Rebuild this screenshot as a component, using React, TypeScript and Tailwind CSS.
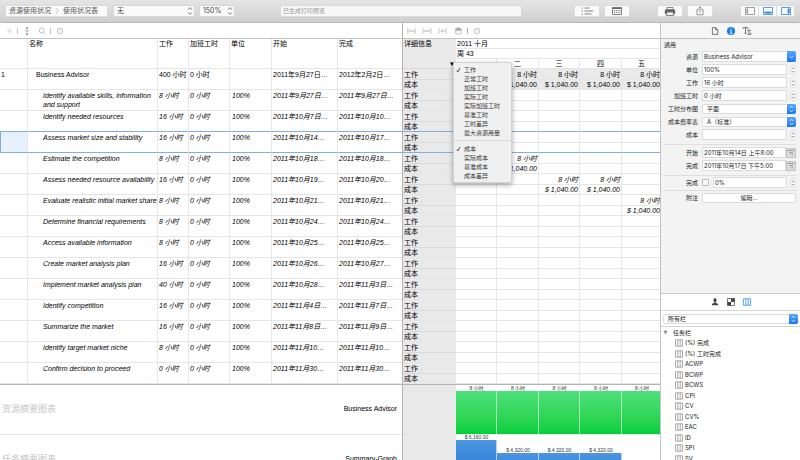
import type { ReactNode } from "react";

type Task = {
  id?: string;
  name: string;
  work: string;
  units: string;
  start: string;
  end: string;
  days?: number[];
  selected?: boolean;
};

const tasks: Task[] = [
  { id: "1", name: "Business Advisor", work: "400 小时", units: "", start: "2011年9月27日…", end: "2012年2月2日…", days: [1, 2, 3, 4] },
  { name: "Identify available skills, information\nand support", work: "8 小时", units: "100%", start: "2011年9月27日…", end: "2011年9月27日…" },
  { name: "Identify needed resources", work: "16 小时", units: "100%", start: "2011年10月7日…", end: "2011年10月10…" },
  { name: "Assess market size and stability", work: "16 小时", units: "100%", start: "2011年10月14…", end: "2011年10月17…", selected: true },
  { name: "Estimate the competition", work: "8 小时", units: "100%", start: "2011年10月18…", end: "2011年10月18…", days: [1] },
  { name: "Assess needed resource availability", work: "16 小时", units: "100%", start: "2011年10月19…", end: "2011年10月20…", days: [2, 3] },
  { name: "Evaluate realistic initial market share", work: "8 小时", units: "100%", start: "2011年10月21…", end: "2011年10月21…", days: [4] },
  { name: "Determine financial requirements", work: "8 小时", units: "100%", start: "2011年10月24…", end: "2011年10月24…" },
  { name: "Access available information", work: "8 小时", units: "100%", start: "2011年10月25…", end: "2011年10月25…" },
  { name: "Create market analysis plan", work: "16 小时", units: "100%", start: "2011年10月26…", end: "2011年10月27…" },
  { name: "Implement market analysis plan", work: "40 小时", units: "100%", start: "2011年10月28…", end: "2011年11月3日…" },
  { name: "Identify competition", work: "16 小时", units: "100%", start: "2011年11月4日…", end: "2011年11月7日…" },
  { name: "Summarize the market", work: "16 小时", units: "100%", start: "2011年11月8日…", end: "2011年11月9日…" },
  { name: "Identify target market niche", work: "8 小时", units: "100%", start: "2011年11月10…", end: "2011年11月10…" },
  { name: "Confirm decision to proceed", work: "0 小时", units: "100%", start: "2011年11月30…", end: "2011年11月30…" },
];

const dayNames = ["", "二", "三", "四", "五"];
const workItems = ["工作", "正常工时", "加班工时", "实际工时", "实际加班工时", "基准工时", "工时差异", "最大资源用量"];
const costItems = ["成本", "实际成本", "基准成本", "成本差异"];
const columnItems = ["(%) 完成", "(%) 工时完成", "ACWP", "BCWP", "BCWS", "CPI", "CV", "CV%", "EAC", "ID", "SPI", "SV"];

const TABLE_FONT = "font-['Liberation_Sans','Noto_Sans_CJK_SC',sans-serif]";
const LINE = "border-[#e6e6e6]";
const SELECTED_LINE = "border-[#7fb0df]";

function lineFor(index: number) {
  return tasks[index].selected || tasks[index + 1]?.selected ? SELECTED_LINE : LINE;
}

function Chevrons({ className = "" }: { className?: string }) {
  return (
    <svg viewBox="0 0 6 10" className={className} fill="none" stroke="currentColor" strokeWidth="1" aria-hidden="true">
      <path d="M1 3.6 3 1.6l2 2M1 6.4l2 2 2-2" />
    </svg>
  );
}

function ToolSelect({ label, value, width }: { label: string; value: string; width: string }) {
  return (
    <div className={`relative h-3 shrink-0 ${width}`}>
      <select
        aria-label={label}
        className="block h-3 w-full appearance-none rounded-[2px] border border-[#d6d6d6] bg-[#fafafa] pl-[3px] text-[7px] leading-[10px] text-[#444]"
      >
        <option>{value}</option>
      </select>
      <Chevrons className="pointer-events-none absolute top-[1px] right-[2px] h-[10px] w-[6px] text-[#777]" />
    </div>
  );
}

function ToolButton({ label, children }: { label: string; children: ReactNode }) {
  return (
    <button
      aria-label={label}
      className="flex h-3 w-[26px] shrink-0 items-center justify-center rounded-[2px] border border-[#dcdcdc] bg-[#fafafa] text-[#666]"
    >
      {children}
    </button>
  );
}

function Toolbar() {
  return (
    <header className="flex h-[23px] shrink-0 items-center border-b border-[#b8b8b8] bg-linear-to-b from-[#e5e5e5] to-[#cfcfcf] px-[5px]">
      <nav className="flex h-3 w-[103px] shrink-0 items-center gap-1 rounded-[2px] border border-[#dcdcdc] bg-[#fafafa] px-[3px] text-[7px] leading-[10px] whitespace-nowrap text-[#555]">
        <a href="#usage">资源使用状况</a>
        <svg viewBox="0 0 4 8" className="h-[8px] w-[4px] text-[#bbb]" fill="none" stroke="currentColor" strokeWidth="0.8" aria-hidden="true">
          <path d="m1 1 2 3-2 3" />
        </svg>
        <a href="#table">使用状况表</a>
      </nav>
      <div className="ml-[5px] flex gap-1">
        <ToolSelect label="筛选" value="无" width="w-[82px]" />
        <ToolSelect label="缩放" value="150%" width="w-[36px]" />
      </div>
      <output className="mr-[52px] ml-[45px] block h-3 min-w-0 flex-1 rounded-[2px] border border-[#dadada] bg-[#f7f7f7] px-[2px] text-[6px] leading-[10px] text-[#999]">
        已生成打印预览
      </output>
      <div className="flex gap-1">
        <ToolButton label="列表">
          <svg viewBox="0 0 12 8" className="h-2 w-3" fill="none" stroke="currentColor" strokeWidth="0.8" aria-hidden="true">
            <path d="M.5 1h1.4M.5 4h1.4M.5 7h1.4M3.500 1h5M3.500 4h8.500M3.500 7h7" />
          </svg>
        </ToolButton>
        <ToolButton label="日历">
          <svg viewBox="0 0 10 8" className="h-2 w-[10px]" fill="none" stroke="currentColor" strokeWidth="0.8" aria-hidden="true">
            <path d="M.5.5h9v7h-9z" />
            <path d="M.5 1.3h9" strokeWidth="1.4" />
            <path d="M2 3.6h6.5M2 5.4h6.5" strokeDasharray="1.1 0.7" />
          </svg>
        </ToolButton>
      </div>
      <div className="ml-[27px] flex gap-1">
        <ToolButton label="打印">
          <svg viewBox="0 0 12 9" className="h-[9px] w-3" aria-hidden="true">
            <path d="M3 .5h6v2.2H3z" fill="#fff" stroke="#555" strokeWidth="0.7" />
            <rect x="0.8" y="2.6" width="10.4" height="4.4" rx="1" fill="#666" />
            <path d="M2.8 5h6.4l.6 3.5H2.2z" fill="#eee" stroke="#555" strokeWidth="0.7" />
          </svg>
        </ToolButton>
        <ToolButton label="共享">
          <svg viewBox="0 0 8 10" className="h-[10px] w-2" fill="none" stroke="currentColor" strokeWidth="0.7" aria-hidden="true">
            <path d="M2.6 3.6H1v5.2h6V3.6H5.4M4 6.5V.9M2.4 2.4 4 .8l1.6 1.6" />
          </svg>
        </ToolButton>
      </div>
      <div className="ml-[27px] flex h-3 w-[55px] shrink-0 divide-x divide-[#dcdcdc] rounded-[2px] border border-[#dcdcdc] bg-[#fafafa]">
        <button aria-label="左侧栏" className="flex flex-1 items-center justify-center">
          <svg viewBox="0 0 10 8" className="h-2 w-[10px]" aria-hidden="true">
            <path d="M.5.5h9v7h-9z" fill="none" stroke="#888" strokeWidth="0.8" />
            <path d="M1.5 1.5h1.6v5H1.5z" fill="#999" />
          </svg>
        </button>
        <button aria-label="底部栏" className="flex flex-1 items-center justify-center">
          <svg viewBox="0 0 10 8" className="h-2 w-[10px]" aria-hidden="true">
            <path d="M.5.5h9v7h-9z" fill="none" stroke="#2f86ea" strokeWidth="0.8" />
            <path d="M1.5 4.6h7v2h-7z" fill="#2f86ea" />
          </svg>
        </button>
        <button aria-label="右侧栏" className="flex flex-1 items-center justify-center">
          <svg viewBox="0 0 10 8" className="h-2 w-[10px]" aria-hidden="true">
            <path d="M.5.5h9v7h-9z" fill="none" stroke="#2f86ea" strokeWidth="0.8" />
            <path d="M6.6 1.5h2v5h-2z" fill="#2f86ea" />
          </svg>
        </button>
      </div>
    </header>
  );
}

function TaskTools() {
  return (
    <div className="flex h-4 shrink-0 items-center border-b border-[#c4c4c4] px-[6px] text-[#b4b4b4]">
      <svg viewBox="0 0 60 10" className="h-[10px] w-[60px]" fill="none" stroke="currentColor" strokeWidth="0.8" aria-hidden="true">
        <path d="M1 5h5M3.5 2.5v5" stroke="#ccc" />
        <path d="M11.5 2v6M44.5 2v6" />
        <path d="M19.5 5h3M21 1v2.5M21 6.5V9M20 2.2l1-1 1 1M20 7.8l1 1 1-1" stroke="#777" />
        <circle cx="35.6" cy="4.4" r="2.4" />
        <path d="m37.4 6.2 2 2" />
        <circle cx="54" cy="5" r="2.8" />
        <path d="M54 3.4V5h1.4" stroke="#ccc" />
      </svg>
    </div>
  );
}

function TimelineTools() {
  return (
    <div className="flex h-4 shrink-0 items-center border-b border-[#c4c4c4] px-[4px] text-[#b4b4b4]">
      <svg viewBox="0 0 74 10" className="h-[10px] w-[74px]" fill="none" stroke="currentColor" strokeWidth="0.8" aria-hidden="true">
        <path d="M.8 2.2v5.6M8.2 2.2v5.6M2 5h5M3.4 3.8 2.2 5l1.2 1.2M5.6 3.8 6.8 5 5.6 6.2" />
        <path d="M16 2.2v5.6M24 2.2v5.6M16.8 5h6.4M18 3.8 19.2 5 18 6.2M22 3.8 20.8 5 22 6.2" />
        <path d="M32 2.2v5.6M39 2.2v5.6M33 5h5M35.5 3.6v2.8" />
        <path d="M48.2 4.4a3.2 2.6 0 0 1 6.4 0z" fill="#aaa" />
        <path d="M48.8 5v3h5.2V5" />
        <path d="M60.5 2v6" stroke="#999" />
        <circle cx="70" cy="5" r="2.8" />
        <path d="M70 3.4V5h1.4" stroke="#ccc" />
      </svg>
    </div>
  );
}

function TaskTable() {
  return (
    <table className={`w-full shrink-0 table-fixed border-separate border-spacing-0 text-left text-[7px] leading-[9px] whitespace-pre text-black ${TABLE_FONT}`}>
      <colgroup>
        <col className="w-[28px]" />
        <col />
        <col className="w-[31px]" />
        <col className="w-[41px]" />
        <col className="w-[42px]" />
        <col className="w-[66px]" />
        <col className="w-[64px]" />
      </colgroup>
      <thead>
        <tr>
          {["", "名称", "工作", "加班工时", "单位", "开始", "完成"].map((title, i) => (
            <th
              key={title}
              scope="col"
              className={`h-[30px] border-b px-[1px] align-top font-normal ${LINE} ${i < 6 ? "border-r" : ""}`}
            >
              {title}
            </th>
          ))}
        </tr>
      </thead>
      <tbody>
        {tasks.map((task, i) => {
          const cell = `h-[21px] border-b py-[1px] align-top ${lineFor(i)}`;
          const inner = `${cell} border-r border-r-[#e6e6e6]`;
          return (
            <tr key={task.name} className={task.id ? "" : "italic"}>
              <td className={`${inner} pl-[1px] ${task.selected ? "border-l border-l-[#7fb0df] bg-[#e6f1fd]" : ""}`}>{task.id}</td>
              <td className={`${inner} ${task.id ? "pl-[8px]" : "pl-[15px]"}`}>{task.name}</td>
              <td className={`${inner} pl-[1px]`}>{task.work}</td>
              <td className={`${inner} pl-[1px]`}>0 小时</td>
              <td className={`${inner} pl-[2px]`}>{task.units}</td>
              <td className={`${inner} pl-[1px]`}>{task.start}</td>
              <td className={`${cell} pl-[1px]`}>{task.end}</td>
            </tr>
          );
        })}
      </tbody>
    </table>
  );
}

function TimelineTable() {
  return (
    <table className={`w-full min-w-[259px] shrink-0 table-fixed border-separate border-spacing-0 text-right text-[7px] leading-[9px] whitespace-nowrap text-black ${TABLE_FONT}`}>
      <colgroup>
        <col className="w-[53px]" />
        <col className="w-[41px]" />
        <col className="w-[42px]" />
        <col className="w-[41px]" />
        <col className="w-[42px]" />
        <col />
      </colgroup>
      <thead className="text-left">
        <tr>
          <th scope="col" rowSpan={3} className="border-b border-[#dadada] bg-[#e9e9e9] px-[1px] align-top font-normal">
            详细信息
          </th>
          <th colSpan={5} className={`h-[10px] border-b px-[1px] font-normal ${LINE}`}>
            2011 十月
          </th>
        </tr>
        <tr>
          <th colSpan={5} className={`h-[10px] border-b px-[1px] font-normal ${LINE}`}>
            周 43
          </th>
        </tr>
        <tr className="text-center">
          {dayNames.map((day) => (
            <th key={day} className={`h-[10px] border-r border-b font-normal ${LINE}`}>
              {day}
            </th>
          ))}
        </tr>
      </thead>
      {tasks.map((task, i) => {
        const shade = task.id ? "bg-[#e9e9e9]" : "";
        return (
          <tbody key={task.name}>
            <tr>
              <th scope="row" className="h-[11px] border-b border-[#dadada] bg-[#e9e9e9] px-[1px] text-left font-normal">
                工作
              </th>
              {dayNames.map((day, d) => (
                <td key={day} className={`h-[11px] border-r border-b pr-[1px] ${LINE} ${shade} ${task.id ? "" : "italic"}`}>
                  {task.days?.includes(d) ? "8 小时" : ""}
                </td>
              ))}
            </tr>
            <tr>
              <th scope="row" className={`h-[10px] border-b bg-[#e9e9e9] px-[1px] text-left font-normal ${lineFor(i)}`}>
                成本
              </th>
              {dayNames.map((day, d) => (
                <td key={day} className={`h-[10px] border-r border-b border-r-[#e6e6e6] pr-[1px] ${lineFor(i)} ${shade} ${task.id ? "" : "italic"}`}>
                  {task.days?.includes(d) ? "$ 1,040.00" : ""}
                </td>
              ))}
            </tr>
          </tbody>
        );
      })}
    </table>
  );
}

function MenuItem({ text, checked }: { text: string; checked: boolean }) {
  return (
    <button
      role="menuitemcheckbox"
      aria-checked={checked}
      className="flex h-[9px] w-full items-center gap-[3px] pl-[2px] text-[6px] leading-[9px] whitespace-nowrap text-[#333]"
    >
      <svg viewBox="0 0 5 6" className="h-[6px] w-[5px]" fill="none" stroke="currentColor" strokeWidth="0.8" aria-hidden="true">
        {checked && <path d="M.8 3.4 1.8 5 4 .8" />}
      </svg>
      {text}
    </button>
  );
}

function DetailMenu() {
  return (
    <div role="menu" className="absolute top-[23px] left-[50px] w-[59px] rounded-[2px] border border-[#d2d2d2] bg-[#f0f0f0] py-[2px] shadow-[0_2px_5px_rgba(0,0,0,0.35)]">
      {workItems.map((text, i) => (
        <MenuItem key={text} text={text} checked={i === 0} />
      ))}
      <hr className="my-[3px] border-[#dadada]" />
      {costItems.map((text, i) => (
        <MenuItem key={text} text={text} checked={i === 0} />
      ))}
    </div>
  );
}

const SUMMARY_GRID = "grid min-w-[259px] grid-cols-[53px_41px_42px_41px_42px_minmax(40px,1fr)] shrink-0";

function SummaryChart({ bars }: { bars: { label: string; height: number; fill: string }[] }) {
  return (
    <div className={`${SUMMARY_GRID} h-[50px] border-b text-center text-[5px] leading-[5px] text-[#333] ${LINE} ${TABLE_FONT}`}>
      <div className="bg-[#e9e9e9]" />
      {bars.map((bar, i) => (
        <div key={i} className={`flex flex-col justify-end whitespace-nowrap ${bar.fill ? "" : "invisible"}`}>
          <span>{bar.label}</span>
          <div className={`w-full border-r border-white/60 ${bar.fill}`} style={{ height: bar.height }} />
        </div>
      ))}
    </div>
  );
}

const GREEN = "bg-linear-to-b from-[#4de07a] to-[#00cf3a]";
const BLUE = "bg-linear-to-b from-[#4a96e0] to-[#1f6fd0]";
const hourBars = dayNames.map(() => ({ label: "8 小时", height: 43, fill: GREEN }));
const costBars = [
  { label: "$ 6,160.00", height: 44, fill: BLUE },
  { label: "$ 4,320.00", height: 31, fill: BLUE },
  { label: "$ 4,320.00", height: 31, fill: BLUE },
  { label: "$ 4,320.00", height: 31, fill: BLUE },
  { label: "", height: 0, fill: "" },
];

function SummaryLabel({ title, name }: { title: string; name: string }) {
  return (
    <div className={`flex h-[50px] shrink-0 items-center justify-between border-b pr-[5px] pb-[2px] pl-[2px] ${LINE} ${TABLE_FONT}`}>
      <h2 className="text-[9px] leading-[12px] text-[#c6c6c6]">{title}</h2>
      <span className="text-[7px] leading-[9px] text-black">{name}</span>
    </div>
  );
}

function Field({ id, label, children }: { id: string; label: string; children: ReactNode }) {
  return (
    <div className="flex h-[13px] items-center">
      <label htmlFor={id} className="w-[37px] shrink-0 text-right whitespace-nowrap">
        {label}
      </label>
      <div className="ml-[4px] flex min-w-0 flex-1 items-center">{children}</div>
    </div>
  );
}

const INPUT = "block h-[11px] min-w-0 flex-1 border border-[#dcdcdc] bg-white px-[1px] text-[6px] leading-[9px] text-[#222]";

function Stepper({ label }: { label: string }) {
  return (
    <button aria-label={label} className="ml-[3px] flex h-[10px] w-[6px] shrink-0 items-center justify-center rounded-[2px] border border-[#e2e2e2] bg-[#fafafa]">
      <Chevrons className="h-[8px] w-[4px] text-[#666]" />
    </button>
  );
}

function StepField({ id, label, value }: { id: string; label: string; value: string }) {
  return (
    <Field id={id} label={label}>
      <input id={id} defaultValue={value} className={INPUT} />
      <Stepper label={`调整${label}`} />
    </Field>
  );
}

function BlueCap({ down = false }: { down?: boolean }) {
  return (
    <span className="pointer-events-none absolute top-0 right-0 flex h-full w-[9px] items-center justify-center rounded-r-[2px] bg-linear-to-b from-[#58a8f8] to-[#1a76ee] text-white">
      {down ? (
        <svg viewBox="0 0 6 10" className="h-[8px] w-[5px]" fill="none" stroke="currentColor" strokeWidth="1" aria-hidden="true">
          <path d="m1 4 2 2 2-2" />
        </svg>
      ) : (
        <Chevrons className="h-[8px] w-[5px]" />
      )}
    </span>
  );
}

function SelectField({ id, label, value }: { id: string; label: string; value: string }) {
  return (
    <Field id={id} label={label}>
      <div className="relative min-w-0 flex-1">
        <select id={id} className="block h-[10px] w-full appearance-none rounded-[2px] border border-[#dcdcdc] bg-white pl-[4px] text-[6px] leading-[8px] text-[#222]">
          <option>{value}</option>
        </select>
        <BlueCap />
      </div>
    </Field>
  );
}

function DateField({ id, label, value }: { id: string; label: string; value: string }) {
  return (
    <Field id={id} label={label}>
      <input id={id} defaultValue={value} className={INPUT} />
      <button aria-label={`选择${label}日期`} className="flex h-[10px] w-[10px] shrink-0 items-center justify-center border border-[#c4c4c4] bg-[#ddd]">
        <svg viewBox="0 0 8 8" className="h-[8px] w-[8px]" fill="none" stroke="#888" strokeWidth="0.8" aria-hidden="true">
          <path d="M.5 1.5h7M2 3.8h4M4.5 5.6H6" />
        </svg>
      </button>
    </Field>
  );
}

function Inspector() {
  return (
    <section className="min-h-0 overflow-hidden bg-[#f3f3f3] pr-[4px] text-[6px] leading-[9px] text-[#222]">
      <h2 className="h-[11px] pl-[3px] leading-[11px]">通用</h2>
      <Field id="resource" label="资源">
        <div className="relative flex min-w-0 flex-1">
          <input id="resource" defaultValue="Business Advisor" className={INPUT} />
          <BlueCap down />
        </div>
      </Field>
      <StepField id="units" label="单位" value="100%" />
      <StepField id="work" label="工作" value="16 小时" />
      <StepField id="overtime" label="加班工时" value="0 小时" />
      <SelectField id="profile" label="工时分布图" value="平面" />
      <SelectField id="rate" label="成本费率表" value="A（标准）" />
      <StepField id="cost" label="成本" value="" />
      <hr className="mt-[3px] mb-[1px] ml-[3px] border-[#dedede]" />
      <DateField id="start" label="开始" value="2011年10月14日 上午8:00" />
      <DateField id="finish" label="完成" value="2011年10月17日 下午5:00" />
      <hr className="mt-[3px] ml-[3px] border-[#dedede]" />
      <Field id="complete" label="完成">
        <input type="checkbox" aria-label="标记为完成" className="mr-[4px] h-[7px] w-[7px] shrink-0 appearance-none rounded-[1px] border border-[#bbb] bg-white" />
        <input id="complete" defaultValue="0%" className={INPUT} />
        <Stepper label="调整完成" />
      </Field>
      <hr className="mt-[1px] ml-[3px] border-[#dedede]" />
      <Field id="notes" label="附注">
        <button id="notes" className="h-[10px] flex-1 rounded-[2px] border border-[#dadada] bg-white text-center leading-[8px]">
          编辑...
        </button>
      </Field>
    </section>
  );
}

function InspectorTabs() {
  return (
    <div className="flex h-4 shrink-0 items-center justify-center gap-[6px] border-b border-[#c4c4c4] bg-[#f6f6f6]">
      <button aria-label="文稿">
        <svg viewBox="0 0 10 10" className="block h-[10px] w-[10px]" fill="none" stroke="#555" strokeWidth="0.8" aria-hidden="true">
          <path d="M2.4 1.6h3.4l2 2v4.8H2.4zM5.6 1.8v2h2" />
        </svg>
      </button>
      <button aria-label="信息">
        <svg viewBox="0 0 10 10" className="block h-[10px] w-[10px]" aria-hidden="true">
          <circle cx="5" cy="5" r="4" fill="#1b7bf0" />
          <path d="M4.2 4.3h1v3M4 7.4h2.2" stroke="#fff" strokeWidth="0.8" fill="none" />
          <circle cx="5" cy="2.8" r="0.6" fill="#fff" />
        </svg>
      </button>
      <button aria-label="样式">
        <svg viewBox="0 0 10 10" className="block h-[10px] w-[10px]" fill="none" stroke="#555" strokeWidth="0.8" aria-hidden="true">
          <path d="M1 2.6V1.6h5v1M3.5 1.6v5.6M2.4 7.4h2.2M5.2 4.2h3.6M7 4.2v3.4M5.4 8.4h3.4V6.6" />
        </svg>
      </button>
    </div>
  );
}

function ColumnIcon() {
  return (
    <svg viewBox="0 0 8 8" className="h-[8px] w-[8px] shrink-0" fill="none" stroke="#888" strokeWidth="0.7" aria-hidden="true">
      <path d="M.5.8h7v6.4h-7zM2.8.8v6.4M5.2.8v6.4" />
    </svg>
  );
}

function Library() {
  return (
    <section className="flex min-h-0 flex-col overflow-hidden border-t border-[#cdcdcd] bg-white text-[6px] text-[#222]">
      <div className="flex h-[17px] shrink-0 items-center justify-center gap-[6px] border-b border-[#d6d6d6]">
        <button aria-label="资源">
          <svg viewBox="0 0 10 10" className="block h-[10px] w-[10px]" fill="#444" aria-hidden="true">
            <path d="M5 1.2c1.2 0 1.7.8 1.6 1.9-.1.9-.5 1.5-.9 1.8v1l2.3.9v1.4H2V6.8l2.3-.9v-1c-.4-.3-.8-.9-.9-1.8C3.3 2 3.8 1.2 5 1.2z" />
          </svg>
        </button>
        <button aria-label="样式库">
          <svg viewBox="0 0 10 10" className="block h-[10px] w-[10px]" aria-hidden="true">
            <path d="M1.500 1.500h7v7h-7z" fill="#fff" stroke="#555" strokeWidth="0.8" />
            <path d="M1.500 5H5v3.500H1.500zM5 1.500h3.500V5H5z" fill="#444" />
          </svg>
        </button>
        <button aria-label="栏">
          <svg viewBox="0 0 10 10" className="block h-[10px] w-[10px]" fill="none" stroke="#2f8bee" strokeWidth="0.8" aria-hidden="true">
            <path d="M1.4 1.8h7.2v6.4H1.4zM3.8 1.8v6.4M6.2 1.8v6.4" />
          </svg>
        </button>
      </div>
      <div className="flex h-4 shrink-0 items-center border-b border-[#d6d6d6] px-[2px]">
        <div className="relative min-w-0 flex-1">
          <select aria-label="栏类别" className="block h-[10px] w-full appearance-none rounded-[2px] border border-[#dcdcdc] bg-white pl-[4px] leading-[8px]">
            <option>所有栏</option>
          </select>
          <BlueCap />
        </div>
      </div>
      <h2 className="flex h-[11px] shrink-0 items-center gap-[5px] pl-[2px] leading-[11px]">
        <svg viewBox="0 0 6 6" className="h-[5px] w-[5px]" fill="#888" aria-hidden="true">
          <path d="M.5 1h5L3 5z" />
        </svg>
        任务栏
      </h2>
      <ul>
        {columnItems.map((item) => (
          <li key={item} className="flex items-center gap-[2px] pl-[14px] leading-[10px] odd:h-[10px] even:h-[11px]">
            <ColumnIcon />
            {item}
          </li>
        ))}
      </ul>
    </section>
  );
}

export default function App() {
  return (
    <div className="flex h-screen flex-col overflow-hidden bg-white font-[Inter,'Noto_Sans_CJK_SC',sans-serif]">
      <Toolbar />
      <main className="grid min-h-0 flex-1 grid-cols-[minmax(0,403fr)_minmax(0,257fr)_140px]">
        <section className="flex min-h-0 flex-col overflow-hidden border-r border-[#b4b4b4]">
          <TaskTools />
          <TaskTable />
          <div className="border-t border-[#b4b4b4]">
            <SummaryLabel title="资源摘要图表" name="Business Advisor" />
            <SummaryLabel title="任务摘要图表" name="Summary-Graph" />
          </div>
        </section>
        <section className="flex min-h-0 flex-col overflow-hidden">
          <TimelineTools />
          <div className="relative">
            <TimelineTable />
            <svg viewBox="0 0 4 4" className="absolute top-[23px] left-[47px] h-[4px] w-[4px]" fill="#000" aria-hidden="true">
              <path d="M0 .5h4L2 4z" />
            </svg>
            <DetailMenu />
          </div>
          <div className="border-t border-[#b4b4b4]">
            <SummaryChart bars={hourBars} />
            <SummaryChart bars={costBars} />
          </div>
        </section>
        <aside className="flex min-h-0 flex-col border-l border-[#c4c4c4]">
          <InspectorTabs />
          <div className="grid min-h-0 flex-1 grid-rows-[minmax(0,254fr)_minmax(0,167fr)]">
            <Inspector />
            <Library />
          </div>
        </aside>
      </main>
    </div>
  );
}
